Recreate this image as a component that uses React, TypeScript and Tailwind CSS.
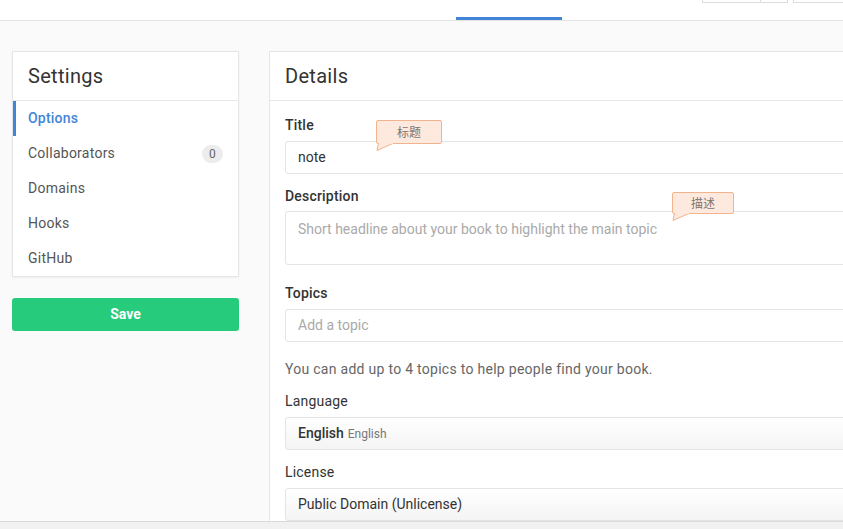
import React from "react";

function Tip({ text, className }: { text: string; className: string }) {
  return (
    <div className={"absolute " + className}>
      <div className="relative h-full w-full rounded-[2px] border border-[#f2b48c] bg-[#fde9de] flex items-center justify-center text-[12px] text-[#7d7571]" style={{ fontFamily: '"Noto Sans CJK SC", sans-serif' }}>
        {text}
      </div>
      <svg className="absolute left-0 top-full -mt-[1px]" width="22" height="9" viewBox="0 0 22 9">
        <path d="M2.5 0 L1 7.5 L18 0" fill="#fde9de" stroke="#f2b48c" strokeWidth="1" />
        <path d="M3 0 L17 0" stroke="#fde9de" strokeWidth="1.5" />
      </svg>
    </div>
  );
}

export default function App() {
  const items = ["Collaborators", "Domains", "Hooks", "GitHub"];
  return (
    <div className="h-[529px] w-[843px] overflow-hidden flex flex-col bg-[#fafafa] text-[#333]" style={{ fontFamily: 'Roboto, "Noto Sans CJK SC", sans-serif' }}>
      <div className="h-[21px] shrink-0 bg-white border-b border-[#e4e4e4] flex items-start overflow-hidden">
        <div className="ml-[456px] w-[106px] shrink-0 h-[3px] mt-[17px] bg-[#4285d8]" />
        <div className="ml-[140px] flex shrink-0">
          <div className="w-[58px] h-[3px] border-l border-b border-[#dcdcdc]" />
          <div className="w-[28px] h-[3px] border-l border-r border-b border-[#dcdcdc]" />
        </div>
        <div className="ml-[5px] w-[60px] shrink-0 h-[3px] border-l border-b border-[#dcdcdc]" />
      </div>

      <div className="flex-1 flex pt-[30px] pl-[12px] gap-[30px] min-h-0">
        <div className="w-[227px] shrink-0">
          <div className="bg-white border border-[#e6e6e6] shadow-[0_1px_2px_rgba(0,0,0,0.05)]">
            <div className="h-[49px] border-b border-[#e6e6e6] flex items-center pl-[15px] text-[20px] text-[#333] tracking-[0.3px]">Settings</div>
            <div className="h-[35px] flex items-center pl-[12px] border-l-[3px] border-[#4285d8] text-[14px] font-medium text-[#4285d8] tracking-[0.2px]">
              Options
            </div>
            {items.map((t) => (
              <div key={t} className="h-[35px] flex items-center pl-[15px] pr-[15px] text-[14px] text-[#555] tracking-[0.25px]">
                <span className="flex-1">{t}</span>
                {t === "Collaborators" && (
                  <span className="w-[21px] h-[18px] rounded-full bg-[#ececec] text-[12px] text-[#666] flex items-center justify-center">0</span>
                )}
              </div>
            ))}
          </div>
          <div className="mt-[21px] h-[33px] rounded-[3px] bg-[#26cb7c] text-white text-[14px] font-bold flex items-center justify-center">Save</div>
        </div>

        <div className="relative w-[620px] shrink-0 bg-white border border-[#e6e6e6] border-b-0">
          <div className="h-[49px] border-b border-[#e6e6e6] flex items-center pl-[15px] text-[20px] text-[#333] tracking-[0.3px]">Details</div>
          <div className="px-[15px] pt-[14px] text-[14px]">
            <div className="h-[20px] leading-[20px] font-medium text-[#333] tracking-[0.2px]">Title</div>
            <div className="mt-[6px] h-[33px] rounded-[3px] border border-[#e4e4e4] flex items-center pl-[12px] text-[#333]">note</div>

            <div className="mt-[12px] h-[20px] leading-[20px] font-medium text-[#333] tracking-[0.2px]">Description</div>
            <div className="mt-[5px] h-[54px] rounded-[3px] border border-[#e4e4e4] pl-[12px] pt-[7px] leading-[20px] text-[#aaa]">Short headline about your book to highlight the main topic</div>

            <div className="mt-[18px] h-[20px] leading-[20px] font-medium text-[#333] tracking-[0.2px]">Topics</div>
            <div className="mt-[6px] h-[33px] rounded-[3px] border border-[#e4e4e4] flex items-center pl-[12px] text-[#aaa]">Add a topic</div>

            <div className="mt-[17px] h-[20px] leading-[20px] text-[#666] tracking-[0.28px]">You can add up to 4 topics to help people find your book.</div>

            <div className="mt-[12px] h-[20px] leading-[20px] text-[#333] tracking-[0.2px]">Language</div>
            <div className="mt-[6px] h-[33px] rounded-[3px] border border-[#e4e4e4] bg-gradient-to-b from-white to-[#f4f4f4] flex items-center pl-[12px]">
              <span className="font-medium text-[#333]">English</span>
              <span className="ml-[4px] text-[12px] text-[#777]">English</span>
            </div>

            <div className="mt-[12px] h-[20px] leading-[20px] text-[#333] tracking-[0.2px]">License</div>
            <div className="mt-[6px] h-[33px] rounded-[3px] border border-[#e4e4e4] bg-gradient-to-b from-white to-[#f4f4f4] flex items-center pl-[12px] text-[#333]">Public Domain (Unlicense)</div>
          </div>

          <Tip text="标题" className="left-[106px] top-[68px] w-[66px] h-[24px]" />
          <Tip text="描述" className="left-[402px] top-[140px] w-[62px] h-[22px]" />
        </div>
      </div>

      <div className="h-[8px] shrink-0 bg-[#f1f1f1] border-t border-[#dadada]" />
    </div>
  );
}
